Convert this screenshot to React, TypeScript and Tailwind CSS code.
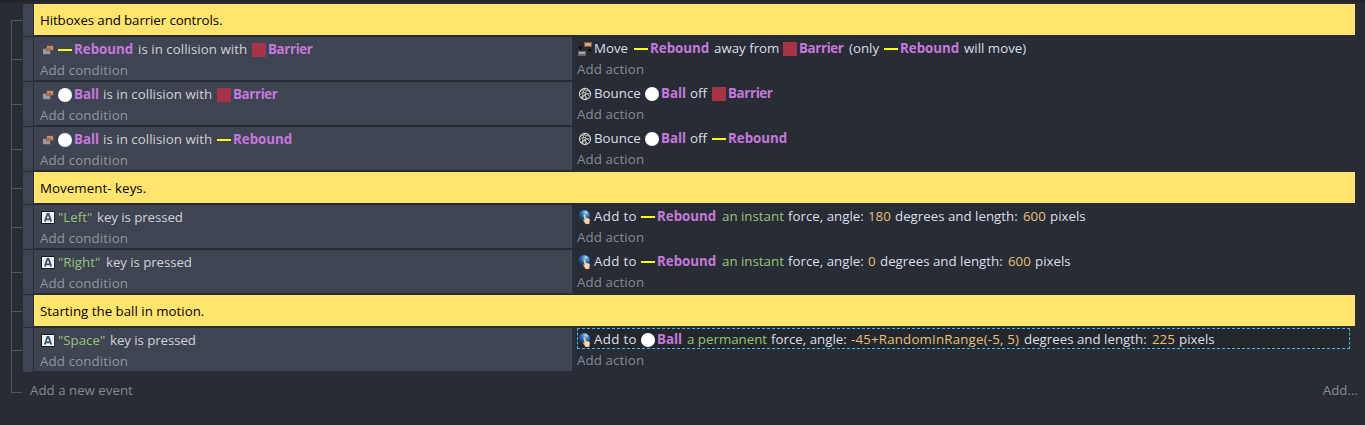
import type { ReactNode } from "react";

function CollisionIcon() {
  return (
    <svg className="mt-[3px] h-4 w-4 shrink-0" viewBox="0 0 16 16" shapeRendering="crispEdges">
      <rect x="6" y="3" width="8" height="6" fill="#5d4c43" />
      <rect x="7" y="4" width="6" height="4" fill="#bd9069" />
      <rect x="3" y="6" width="8" height="7" fill="#55555a" />
      <rect x="3" y="7" width="7" height="5" fill="#99999b" />
      <rect x="6" y="6" width="5" height="3" fill="#a5675d" />
    </svg>
  );
}

function SeparateIcon() {
  return (
    <svg className="mt-[3px] h-4 w-4 shrink-0" viewBox="0 0 16 16" shapeRendering="crispEdges">
      <rect x="7" y="1" width="8" height="5" fill="#82583c" />
      <rect x="8" y="2" width="6" height="3" fill="#d6a77c" />
      <rect x="1" y="10" width="8" height="5" fill="#626866" />
      <rect x="2" y="11" width="6" height="2" fill="#a5aaa6" />
      <path d="M2 5h1v1h2v2H2zM5 4h1v1H5zM11 8h3v3h-1v-1h-2zM10 11h1v1h-1z" fill="#07090c" />
    </svg>
  );
}

function BounceIcon() {
  return (
    <svg className="mt-[3px] h-4 w-4 shrink-0" viewBox="0 0 16 16" fill="none">
      <circle cx="8" cy="8" r="5.6" fill="#1a1c1e" stroke="#d2d2d0" strokeWidth="1.1" />
      <path
        d="M3 5.5C6 3.5 9 3.5 13 6M2.5 9C5 5.5 9 5.5 12 10M4 12C6 8 9 8 10 13M8 2.5C6 5 5 9 6 13M11 3.5C8 6 7 9 9 13.5M13.5 8C10 7 7 9 5 12"
        stroke="#d2d2d0"
        strokeWidth="0.9"
      />
    </svg>
  );
}

function ForceIcon() {
  return (
    <svg className="mt-[3px] h-4 w-4 shrink-0" viewBox="0 0 16 16">
      <defs>
        <radialGradient id="orb" cx="0.65" cy="0.2" r="0.8">
          <stop offset="0" stopColor="#c4e8ff" />
          <stop offset="0.25" stopColor="#4fa0de" />
          <stop offset="0.6" stopColor="#235f9f" />
          <stop offset="1" stopColor="#15304f" />
        </radialGradient>
      </defs>
      <circle cx="7.2" cy="6.8" r="5.7" fill="url(#orb)" />
      <path
        d="M6.8 5.3c.7-.4 1.3 0 1.5.8l.6 2.7 2.8.7c1 .2 1.3.9 1.1 1.8L12.2 15H8.6L6.2 11.2c.2-.6.8-.6 1.3 0L6.6 6.4z"
        fill="#f9d5b5"
        stroke="#a86d4c"
        strokeWidth="0.3"
      />
    </svg>
  );
}

function KeyIcon() {
  return (
    <svg className="mt-[3px] h-4 w-4 shrink-0" viewBox="0 0 16 16">
      <rect x="1" y="1" width="13.5" height="13" rx="1" fill="#14171c" />
      <rect x="2" y="2" width="12" height="11" fill="#f1f3f5" />
      <path
        d="M4.8 11.5 7.4 4h1.2L11.2 11.5M5.8 9.3h4.4"
        fill="none"
        stroke="#34506f"
        strokeWidth="1.8"
      />
    </svg>
  );
}

const OBJECTS = {
  Rebound: { width: "w-[64px]", swatch: "h-[2px] bg-[#ffff00]", track: "" },
  Barrier: { width: "w-[50px]", swatch: "h-[14px] bg-[#a73446]", track: "tracking-[-0.35px]" },
  Ball: { width: "w-[29px]", swatch: "h-[14px] rounded-full bg-white", track: "" },
};

function Obj({ name }: { name: keyof typeof OBJECTS }) {
  const o = OBJECTS[name];
  return (
    <span className="flex items-center font-bold text-[#c678dd]">
      <span className={`mr-[2px] mt-[3px] w-[14px] shrink-0 ${o.swatch}`} />
      <span className={`${o.width} ${o.track} pt-[2px] leading-[19px]`}>{name}</span>
    </span>
  );
}

function T({ w, c = "", children }: { w: string; c?: string; children: ReactNode }) {
  return <span className={`${w} ${c} shrink-0 pt-[2px] leading-[19px]`}>{children}</span>;
}

const GREEN = "text-[#98c379]";
const GOLD = "text-[#e5c07b]";

function Gutter({ first = false, comment = false }: { first?: boolean; comment?: boolean }) {
  return (
    <div className="flex w-[23px] shrink-0 flex-col pl-[11px]">
      <div
        className={`${comment ? "h-[16px]" : "h-[22px]"} ${first ? "" : "border-l border-[#52555d]"}`}
      />
      <div className="h-px w-[11px] bg-[#52555d]" />
      <div className="flex-1 border-l border-[#52555d]" />
    </div>
  );
}

function Handle() {
  return <div className="mb-px mr-px w-[10px] shrink-0 bg-[#3e4451]" />;
}

function Comment({
  children,
  first,
  track = "",
}: {
  children: ReactNode;
  first?: boolean;
  track?: string;
}) {
  return (
    <div className="flex h-[33px]">
      <Gutter first={first} comment />
      <Handle />
      <div
        className={`mb-[2px] mr-[10px] flex flex-1 items-center bg-[#ffe56d] pb-px pl-[6px] pt-[2px] text-black ${track}`}
      >
        {children}
      </div>
    </div>
  );
}

function Event({
  condition,
  action,
  selected = false,
}: {
  condition: ReactNode;
  action: ReactNode;
  selected?: boolean;
}) {
  return (
    <div className="flex h-[45px]">
      <Gutter />
      <Handle />
      <div className="mb-[2px] w-[538px] shrink-0 border-r border-[#4a4b52] bg-[#3e4451] pl-[6px] pt-px text-[#d0d2d5]">
        <div className="flex h-[21px] items-center">{condition}</div>
        <div className="flex h-[21px] items-center pt-[2px] tracking-[0.13px] text-[#92959d]">
          Add condition
        </div>
      </div>
      <div className="ml-[5px] mr-[15px] flex-1 text-[#dbdfe9]">
        <div
          className={`flex h-[21px] items-center ${selected ? "bg-[#23272c] outline-dashed outline-1 -outline-offset-1 outline-[#42b4e8]" : ""}`}
        >
          {action}
        </div>
        <div className="flex h-[21px] items-center pt-[2px] tracking-[0.1px] text-[#868a92]">
          Add action
        </div>
      </div>
    </div>
  );
}

function Collision({ a, b }: { a: keyof typeof OBJECTS; b: keyof typeof OBJECTS }) {
  return (
    <>
      <CollisionIcon />
      <span className="w-[2px]" />
      <Obj name={a} />
      <T w="w-[114px]" c="tracking-[0.04px]">is in collision with</T>
      <Obj name={b} />
    </>
  );
}

function KeyPressed({ name, w }: { name: string; w: string }) {
  return (
    <>
      <KeyIcon />
      <span className="w-[2px]" />
      <T w={w} c={GREEN}>{`"${name}"`}</T>
      <T w="w-[90px]" c="tracking-[-0.08px]">key is pressed</T>
    </>
  );
}

function Bounce({ target }: { target: keyof typeof OBJECTS }) {
  return (
    <>
      <BounceIcon />
      <span className="w-px" />
      <T w="w-[51px]">Bounce</T>
      <Obj name="Ball" />
      <T w="w-[22px]">off</T>
      <Obj name={target} />
    </>
  );
}

function AddForce({
  object,
  kind,
  kindWidth,
  angle,
  angleWidth,
  length,
}: {
  object: keyof typeof OBJECTS;
  kind: string;
  kindWidth: string;
  angle: string;
  angleWidth: string;
  length: string;
}) {
  return (
    <>
      <ForceIcon />
      <span className="w-px" />
      <T w="w-[47px]" c="tracking-[0.35px]">Add to</T>
      <Obj name={object} />
      <span className="w-px" />
      <T w={kindWidth} c={GREEN}>{kind}</T>
      <T w="w-[80px]">force, angle:</T>
      <T w={angleWidth} c={GOLD}>{angle}</T>
      <T w="w-[128px]">degrees and length:</T>
      <T w="w-[27px]" c={GOLD}>{length}</T>
      <T w="w-[40px]">pixels</T>
    </>
  );
}

export default function App() {
  return (
    <div className="h-[425px] w-[1365px] overflow-hidden whitespace-nowrap bg-[#282c34] font-['Open_Sans','Noto_Sans',sans-serif] text-[13.3px] leading-[21px]">
      <div className="mb-px h-[3px] bg-[#25252e]" />
      <Comment first track="tracking-[-0.1px]">Hitboxes and barrier controls.</Comment>
      <Event
        condition={<Collision a="Rebound" b="Barrier" />}
        action={
          <>
            <SeparateIcon />
            <span className="w-px" />
            <T w="w-[40px]">Move</T>
            <Obj name="Rebound" />
            <T w="w-[69px]">away from</T>
            <Obj name="Barrier" />
            <T w="w-[35px]">(only</T>
            <Obj name="Rebound" />
            <T w="w-[66px]">will move)</T>
          </>
        }
      />
      <Event condition={<Collision a="Ball" b="Barrier" />} action={<Bounce target="Barrier" />} />
      <Event condition={<Collision a="Ball" b="Rebound" />} action={<Bounce target="Rebound" />} />
      <Comment track="tracking-[0.06px]">Movement- keys.</Comment>
      <Event
        condition={<KeyPressed name="Left" w="w-[39px]" />}
        action={
          <AddForce object="Rebound" kind="an instant" kindWidth="w-[66px]" angle="180" angleWidth="w-[27px]" length="600" />
        }
      />
      <Event
        condition={<KeyPressed name="Right" w="w-[48px]" />}
        action={
          <AddForce object="Rebound" kind="an instant" kindWidth="w-[66px]" angle="0" angleWidth="w-[12px]" length="600" />
        }
      />
      <Comment>Starting the ball in motion.</Comment>
      <Event
        selected
        condition={<KeyPressed name="Space" w="w-[52px]" />}
        action={
          <AddForce object="Ball" kind="a permanent" kindWidth="w-[84px]" angle="-45+RandomInRange(-5, 5)" angleWidth="w-[173px] tracking-[0.18px]" length="225" />
        }
      />
      <div className="flex h-[52px]">
        <div className="w-[22px] shrink-0 pl-[11px]">
          <div className="h-[20px] border-b border-l border-[#52555d]" />
        </div>
        <div className="flex flex-1 justify-between pl-[8px] pr-[7px] pt-[7px] text-[#868a92]">
          <span>Add a new event</span>
          <span>Add...</span>
        </div>
      </div>
    </div>
  );
}
